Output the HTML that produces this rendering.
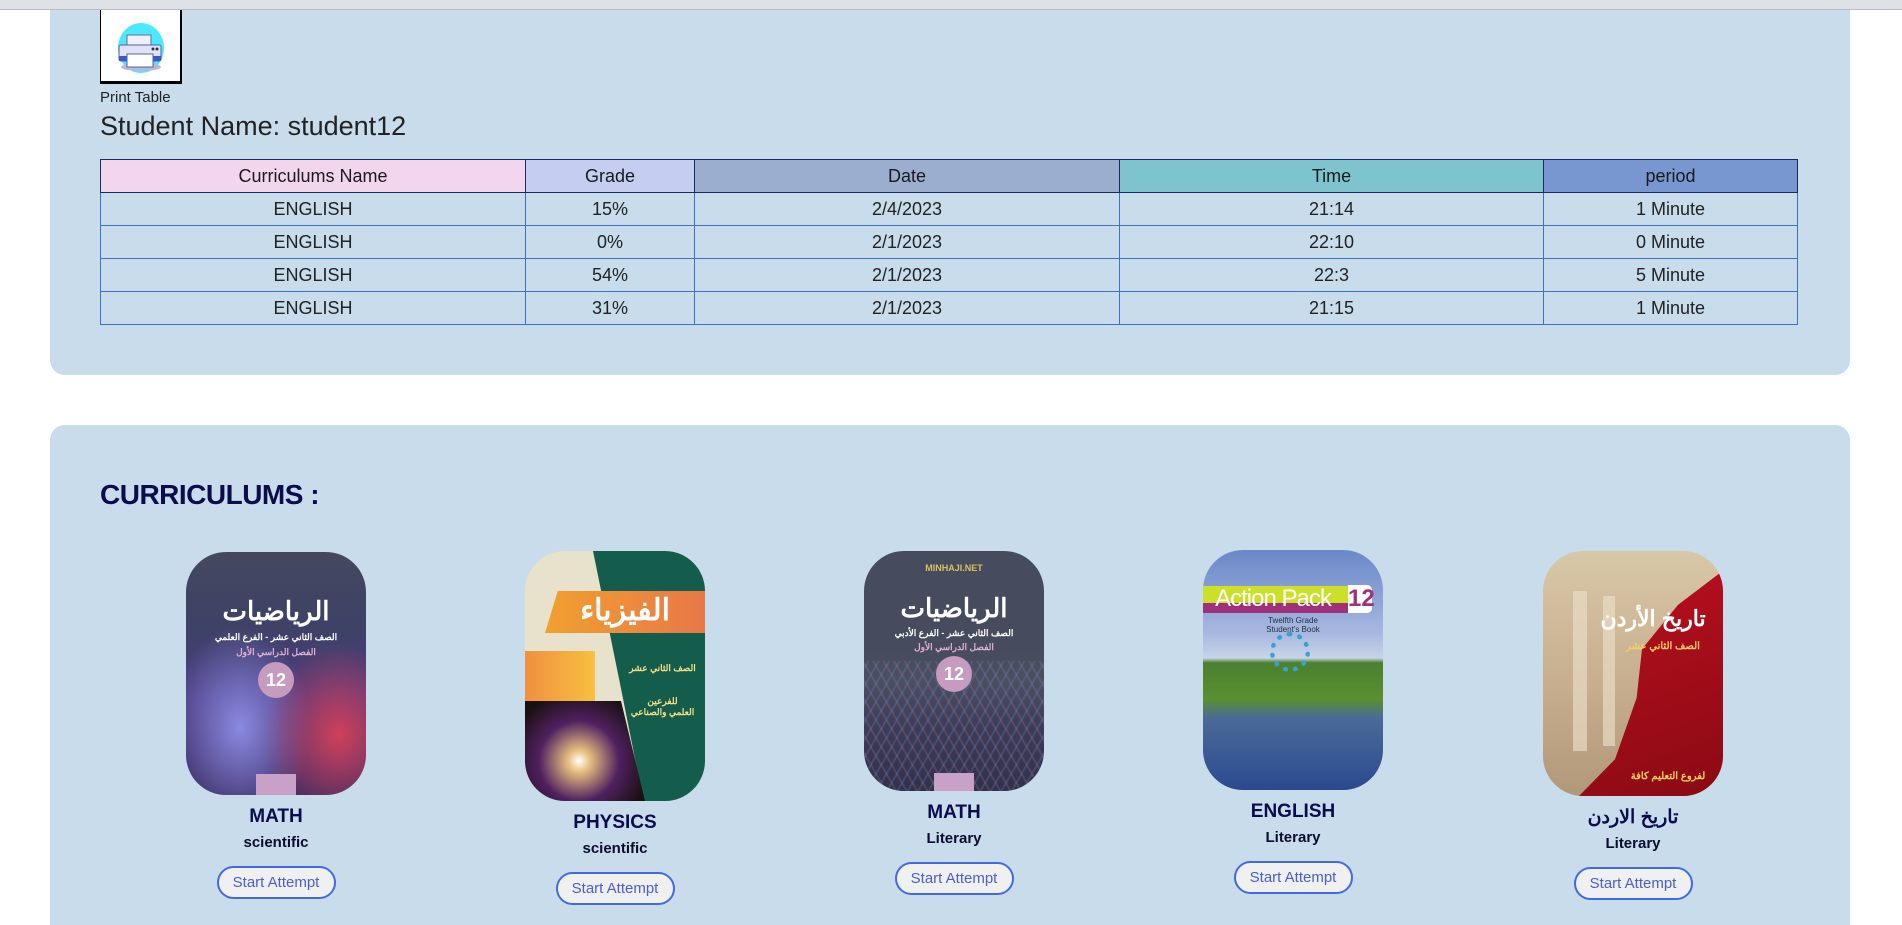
<!DOCTYPE html>
<html><head><meta charset="utf-8">
<style>
*{margin:0;padding:0;box-sizing:border-box}
html,body{width:1902px;height:900px;overflow:hidden;background:#fff;font-family:"Liberation Sans","Noto Sans CJK SC",sans-serif;color:#212529}
.topbar{position:absolute;left:0;top:0;width:1902px;height:10px;background:#dee1e6;border-bottom:1px solid #b8bcc2}
.p1{position:absolute;left:50px;top:10px;width:1800px;height:365px;background:#c8dcec;border-radius:0 0 15px 15px}
.p2{position:absolute;left:50px;top:425px;width:1800px;height:500px;background:#c8dcec;border-radius:15px 15px 0 0}
.printbox{position:absolute;left:100px;top:10px;width:82px;height:74px;background:#fff;border-left:1px solid #000;border-right:2px solid #000;border-bottom:3px solid #000}
.pt{position:absolute;left:100px;top:89px;font-size:15px;color:#222}
.sn{position:absolute;left:100px;top:111px;font-size:27px;color:#222}
table{position:absolute;left:100px;top:159px;width:1698px;border-collapse:collapse;font-size:18px;color:#222}
td,th{height:33px;text-align:center;border:1px solid #3a72d4;font-weight:normal;padding:0}
th{border:1px solid #1a2a5a;font-weight:normal;font-size:18px;color:#1a1a1a}
h2{position:absolute;left:100px;top:479px;font-size:28px;font-weight:bold;color:#0b0b4e;letter-spacing:-0.5px}
.book{position:absolute;width:180px;text-align:center}
.cov{width:180px;border-radius:40px;overflow:hidden;position:relative}
.t{font-weight:bold;font-size:19px;color:#0b0b4e;margin-top:11px;line-height:22px}
.s{font-weight:bold;font-size:15px;color:#0b0b2e;margin-top:6px;line-height:18px}
.btn{display:inline-block;margin-top:14px;width:119px;height:33px;border:2px solid #4169e1;border-radius:17px;background:#f0f0f0;color:#4a5ed0;font-size:15px;line-height:29px}
.ar{font-family:"Liberation Sans","Noto Sans CJK SC",sans-serif;direction:rtl}
.cov .x{position:absolute;left:0;right:0;text-align:center;color:#fff;font-weight:bold}
.badge{position:absolute;left:72px;width:36px;height:36px;border-radius:50%;background:#c79bc0;color:#fff;font-weight:bold;font-size:18px;line-height:36px;text-align:center}
</style></head><body>
<div class="topbar"></div>
<div class="p1"></div>
<div class="p2"></div>
<div class="printbox">
<svg width="80" height="72" viewBox="0 0 80 72">
<ellipse cx="40" cy="38" rx="23" ry="25" fill="#4de8fc"/>
<ellipse cx="40" cy="57" rx="20" ry="4" fill="#b8b8d8"/>
<rect x="26" y="25" width="24" height="12" fill="#f0f0f8" stroke="#6070a0"/>
<rect x="18" y="35" width="42" height="16" rx="2" fill="#dfe3f5" stroke="#5060a8"/>
<rect x="18" y="46" width="42" height="5" fill="#3a58c8"/>
<rect x="26" y="44" width="26" height="13" fill="#fff" stroke="#5060a8"/>
<circle cx="52" cy="39" r="1.5" fill="#334"/><circle cx="56" cy="39" r="1.5" fill="#334"/>
</svg></div>
<div class="pt">Print Table</div>
<div class="sn">Student Name: student12</div>
<table>
<tr><th style="width:425px;background:#f2d6ee">Curriculums Name</th><th style="width:169px;background:#c5cdf0">Grade</th><th style="width:425px;background:#9caed0">Date</th><th style="width:424px;background:#7ec4cf">Time</th><th style="background:#7896d0">period</th></tr>
<tr><td>ENGLISH</td><td>15%</td><td>2/4/2023</td><td>21:14</td><td>1 Minute</td></tr>
<tr><td>ENGLISH</td><td>0%</td><td>2/1/2023</td><td>22:10</td><td>0 Minute</td></tr>
<tr><td>ENGLISH</td><td>54%</td><td>2/1/2023</td><td>22:3</td><td>5 Minute</td></tr>
<tr><td>ENGLISH</td><td>31%</td><td>2/1/2023</td><td>21:15</td><td>1 Minute</td></tr>
</table>
<h2>CURRICULUMS :</h2>

<div class="book" style="left:186px;top:552px">
<div class="cov" style="height:243px;background:radial-gradient(ellipse at 85% 75%,#d0405a 0%,rgba(200,60,90,0) 35%),radial-gradient(ellipse at 30% 72%,#8a8ae0 0%,rgba(120,120,220,0) 40%),linear-gradient(180deg,#44485e 0%,#3e4266 30%,#4a3a80 60%,#3a2a60 100%)">
<div class="x ar" style="top:44px;font-size:26px">الرياضيات</div>
<div class="x ar" style="top:80px;font-size:9px">الصف الثاني عشر - الفرع العلمي</div>
<div class="x ar" style="top:95px;font-size:9px;color:#e0b0d0">الفصل الدراسي الأول</div>
<div class="badge" style="top:110px">12</div>
<div style="position:absolute;left:70px;top:222px;width:40px;height:21px;background:#c8a0c8"></div>
</div>
<div class="t">MATH</div><div class="s">scientific</div><div class="btn">Start Attempt</div>
</div>

<div class="book" style="left:525px;top:551px">
<div class="cov" style="height:250px;background:#e8e2cc">
<div style="position:absolute;left:40px;top:0;width:140px;height:250px;background:#145c4c;clip-path:polygon(20% 0,100% 0,100% 100%,56% 100%,40% 55%)"></div>
<div style="position:absolute;left:20px;top:40px;width:160px;height:42px;background:linear-gradient(90deg,#f0a030,#e87848);clip-path:polygon(8% 0,100% 0,100% 100%,0 100%)"></div>
<div class="x ar" style="top:42px;font-size:30px;left:20px">الفيزياء</div>
<div style="position:absolute;left:0;top:100px;width:70px;height:50px;background:linear-gradient(90deg,#f09040,#f8c040)"></div>
<div style="position:absolute;left:0;top:150px;width:120px;height:100px;background:radial-gradient(circle at 45% 60%,#fff 0%,#e8c080 12%,#502060 45%,#1a1010 80%);clip-path:polygon(0 0,80% 0,100% 100%,0 100%)"></div>
<div class="x ar" style="top:112px;left:95px;font-size:9px;color:#f8e080">الصف الثاني عشر</div>
<div class="x ar" style="top:145px;left:95px;font-size:9px;color:#f8e080">للفرعين<br>العلمي والصناعي</div>
</div>
<div class="t">PHYSICS</div><div class="s">scientific</div><div class="btn">Start Attempt</div>
</div>

<div class="book" style="left:864px;top:551px">
<div class="cov" style="height:240px;background:linear-gradient(180deg,#464c5e 0%,#464c5e 40%,#4a4e62 55%,#3c3a56 75%,#32304a 100%)">
<div style="position:absolute;left:0;top:110px;width:180px;height:130px;background:repeating-linear-gradient(60deg,rgba(160,120,150,.25) 0 2px,transparent 2px 9px),repeating-linear-gradient(-60deg,rgba(100,140,200,.25) 0 2px,transparent 2px 9px)"></div>
<div class="x" style="top:12px;font-size:9px;color:#d8c060">MINHAJI.NET</div>
<div class="x ar" style="top:42px;font-size:26px">الرياضيات</div>
<div class="x ar" style="top:77px;font-size:9px">الصف الثاني عشر - الفرع الأدبي</div>
<div class="x ar" style="top:91px;font-size:9px;color:#e0b0d0">الفصل الدراسي الأول</div>
<div class="badge" style="top:105px">12</div>
<div style="position:absolute;left:70px;top:222px;width:40px;height:18px;background:#c8a0c8"></div>
</div>
<div class="t">MATH</div><div class="s">Literary</div><div class="btn">Start Attempt</div>
</div>

<div class="book" style="left:1203px;top:550px">
<div class="cov" style="height:240px;background:linear-gradient(180deg,#6a88c8 0%,#a8b8e0 35%,#c8d4e8 45%,#4a8030 47%,#5a9030 62%,#4a6a98 70%,#2a4a90 100%)">
<div style="position:absolute;left:0;top:36px;width:145px;height:17px;background:#cce02a"></div>
<div style="position:absolute;left:0;top:53px;width:145px;height:10px;background:#a0307a"></div>
<div style="position:absolute;left:0;top:34px;width:140px;text-align:center;color:#fff;font-size:24px;line-height:30px;letter-spacing:-1px">Action Pack</div>
<div style="position:absolute;left:145px;top:35px;width:24px;height:28px;background:#fff;color:#a0307a;font-weight:bold;font-size:24px;line-height:28px;border-radius:0 5px 5px 0">12</div>
<div style="position:absolute;left:0;right:0;top:66px;font-size:8px;color:#234;line-height:9px">Twelfth Grade<br>Student's Book</div>
<div style="position:absolute;left:67px;top:82px;width:40px;height:40px;border-radius:50%;border:5px dotted #3aa0d0"></div>
</div>
<div class="t">ENGLISH</div><div class="s">Literary</div><div class="btn">Start Attempt</div>
</div>

<div class="book" style="left:1543px;top:551px">
<div class="cov" style="height:245px;background:linear-gradient(180deg,#d8c8a8 0%,#c8b090 50%,#b09878 100%)">
<div style="position:absolute;left:0;top:0;width:180px;height:245px;background:linear-gradient(160deg,#c01020,#8a0a14);clip-path:polygon(100% 8%,75% 22%,55% 40%,52% 60%,40% 85%,20% 100%,100% 100%)"></div>
<div style="position:absolute;left:30px;top:40px;width:14px;height:160px;background:#e8dcc4;opacity:.7"></div>
<div style="position:absolute;left:60px;top:45px;width:12px;height:150px;background:#e8dcc4;opacity:.7"></div>
<div class="x ar" style="top:55px;left:40px;font-size:22px">تاريخ الأردن</div>
<div class="x ar" style="top:90px;left:60px;font-size:10px;color:#f0d060">الصف الثاني عشر</div>
<div class="x ar" style="top:220px;left:70px;font-size:10px;color:#f0d060">لفروع التعليم كافة</div>
</div>
<div class="t ar" style="direction:rtl">تاريخ الاردن</div><div class="s">Literary</div><div class="btn">Start Attempt</div>
</div>
</body></html>
